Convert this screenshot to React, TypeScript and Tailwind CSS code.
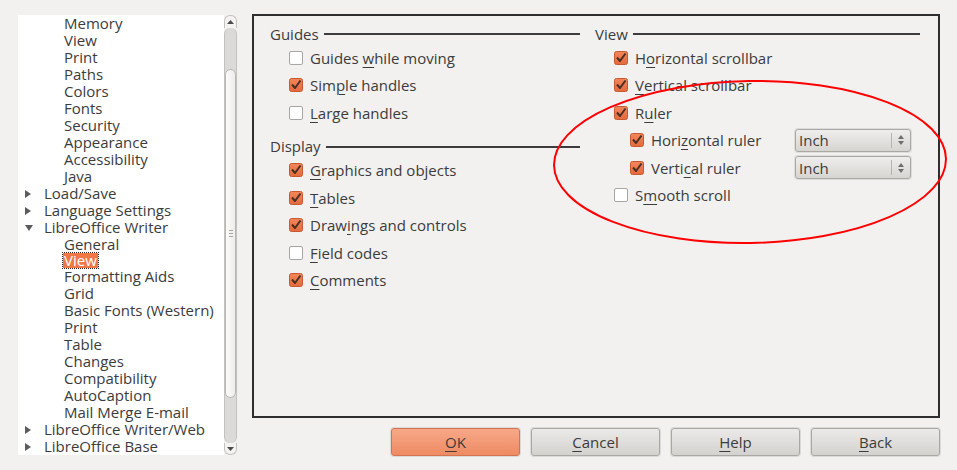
import React from 'react';

const font = { fontFamily: '"Open Sans", "Noto Sans", sans-serif' };

type TreeItem = { label: string; level: 1 | 2; arrow?: 'right' | 'down'; selected?: boolean };

const treeItems: TreeItem[] = [
  { label: 'Memory', level: 2 },
  { label: 'View', level: 2 },
  { label: 'Print', level: 2 },
  { label: 'Paths', level: 2 },
  { label: 'Colors', level: 2 },
  { label: 'Fonts', level: 2 },
  { label: 'Security', level: 2 },
  { label: 'Appearance', level: 2 },
  { label: 'Accessibility', level: 2 },
  { label: 'Java', level: 2 },
  { label: 'Load/Save', level: 1, arrow: 'right' },
  { label: 'Language Settings', level: 1, arrow: 'right' },
  { label: 'LibreOffice Writer', level: 1, arrow: 'down' },
  { label: 'General', level: 2 },
  { label: 'View', level: 2, selected: true },
  { label: 'Formatting Aids', level: 2 },
  { label: 'Grid', level: 2 },
  { label: 'Basic Fonts (Western)', level: 2 },
  { label: 'Print', level: 2 },
  { label: 'Table', level: 2 },
  { label: 'Changes', level: 2 },
  { label: 'Compatibility', level: 2 },
  { label: 'AutoCaption', level: 2 },
  { label: 'Mail Merge E-mail', level: 2 },
  { label: 'LibreOffice Writer/Web', level: 1, arrow: 'right' },
  { label: 'LibreOffice Base', level: 1, arrow: 'right' },
];

// label with one mnemonic letter underlined
const Mnemonic = ({ text, at }: { text: string; at: number }) => (
  <span>
    {text.slice(0, at)}
    <span className="underline decoration-1 underline-offset-[3px]">{text[at]}</span>
    {text.slice(at + 1)}
  </span>
);

const CheckBox = ({ checked }: { checked: boolean }) =>
  checked ? (
    <svg width="14" height="14" viewBox="0 0 14 14" className="shrink-0">
      <defs>
        <linearGradient id="cb" x1="0" y1="0" x2="0" y2="1">
          <stop offset="0" stopColor="#f4865a" />
          <stop offset="1" stopColor="#e36a3d" />
        </linearGradient>
      </defs>
      <rect x="0.5" y="0.5" width="13" height="13" rx="2" fill="url(#cb)" stroke="#c55a32" />
      <path d="M3 6.5 L6 10 L11.5 2.5" fill="none" stroke="#4a2f25" strokeWidth="2" strokeLinejoin="round" />
    </svg>
  ) : (
    <div className="w-[14px] h-[14px] shrink-0 rounded-[2px] border border-[#a8a7a5] bg-white" />
  );

const CheckRow = ({ label, at, checked, indent = false }: { label: string; at: number; checked: boolean; indent?: boolean }) => (
  <div className={`h-[27.5px] flex items-center gap-[7px] whitespace-nowrap ${indent ? 'pl-[35px]' : 'pl-[19px]'}`}>
    <CheckBox checked={checked} />
    <Mnemonic text={label} at={at} />
  </div>
);

const SectionTitle = ({ title }: { title: string }) => (
  <div className="h-[20px] flex items-center gap-[5px]">
    <span>{title}</span>
    <div className="flex-1 h-[2px] bg-[#3c3c3c]" />
  </div>
);

const ListBox = () => (
  <div className="w-[116px] h-[23px] rounded-[3px] border border-[#a9a8a5] bg-gradient-to-b from-[#efeeec] to-[#d6d5d2] flex items-center shadow-[0_0_0_1px_#dedcda]">
    <span className="flex-1 pl-[3px] text-[#3c3c3c]">Inch</span>
    <div className="w-px h-[15px] bg-[#b5b4b1]" />
    <div className="w-[18px] flex flex-col items-center gap-[2px]">
      <svg width="6" height="4" viewBox="0 0 6 4"><path d="M0 4 L3 0 L6 4Z" fill="#6f6e6c" /></svg>
      <svg width="6" height="4" viewBox="0 0 6 4"><path d="M0 0 L3 4 L6 0Z" fill="#6f6e6c" /></svg>
    </div>
  </div>
);

const Button = ({ label, primary = false }: { label: string; primary?: boolean }) => (
  <div
    className={`w-[129px] h-[28px] rounded-[3px] border flex items-center justify-center shadow-[0_0_0_1px_#dcdad7] ${
      primary
        ? 'border-[#d27452] bg-gradient-to-b from-[#f7a888] to-[#ee8a62] text-[#3c3c3c]'
        : 'border-[#a9a8a5] bg-gradient-to-b from-[#ebeae8] to-[#d3d2cf] text-[#3c3c3c]'
    }`}
  >
    <Mnemonic text={label} at={0} />
  </div>
);

const ScrollBar = () => (
  <div className="w-[13px] h-full flex flex-col bg-[#f2f1f0]">
    <div className="h-[13px] flex items-center justify-center rounded-t-[6px] border border-b-0 border-[#c4c2bf] bg-[#f4f3f2]">
      <svg width="7" height="4" viewBox="0 0 7 4"><path d="M0 4 L3.5 0 L7 4Z" fill="#4c4c4c" /></svg>
    </div>
    <div className="flex-1 flex flex-col border-x border-[#c4c2bf] bg-[#dcdad8] rounded-[6px]">
      <div className="h-[41px]" />
      <div className="h-[329px] rounded-[6px] border border-[#b9b7b4] bg-gradient-to-r from-[#fbfbfa] to-[#eeedeb] flex items-center justify-center">
        <div className="flex flex-col gap-[2px]">
          <div className="w-[4px] h-px bg-[#a9a7a4]" />
          <div className="w-[4px] h-px bg-[#a9a7a4]" />
          <div className="w-[4px] h-px bg-[#a9a7a4]" />
        </div>
      </div>
      <div className="flex-1" />
    </div>
    <div className="h-[12px] flex items-center justify-center rounded-b-[6px] border border-t-0 border-[#c4c2bf] bg-[#f4f3f2]">
      <svg width="7" height="4" viewBox="0 0 7 4"><path d="M0 0 L3.5 4 L7 0Z" fill="#4c4c4c" /></svg>
    </div>
  </div>
);

const Tree = () => (
  <div className="w-[219px] h-[440px] mt-[15px] ml-[18px] flex bg-white">
    <div className="flex-1 flex flex-col">
      {treeItems.map((item, i) => (
        <div key={i} className="h-[17px] leading-[17px] flex items-center whitespace-nowrap">
          <div className="w-[7px] shrink-0" />
          <div className="w-[19px] shrink-0 flex items-center">
            {item.arrow === 'right' && (
              <svg width="6" height="8" viewBox="0 0 6 8"><path d="M0 0 L6 4 L0 8Z" fill="#5c5c5c" /></svg>
            )}
            {item.arrow === 'down' && (
              <svg width="8" height="6" viewBox="0 0 8 6"><path d="M0 0 L8 0 L4 6Z" fill="#5c5c5c" /></svg>
            )}
          </div>
          {item.level === 2 && <div className="w-[20px] shrink-0" />}
          <span
            className={
              item.selected
                ? 'bg-[#f07746] text-white px-px -ml-px outline-1 outline-dotted outline-[#2b2b2b] leading-[15px]'
                : ''
            }
          >
            {item.label}
          </span>
        </div>
      ))}
    </div>
    <ScrollBar />
  </div>
);

export default function App() {
  return (
    <div className="relative w-[957px] h-[470px] bg-[#f2f1f0] text-[#3c3c3c] text-[15px] flex overflow-hidden" style={font}>
      <Tree />
      <div className="ml-[15px] mt-[14px] flex flex-col">
        <div className="w-[688px] h-[404px] border-2 border-[#2e2e2e] pl-[16px] pr-[18px] pt-[8px] flex gap-[15px]">
          <div className="w-[310px] flex flex-col">
            <SectionTitle title="Guides" />
            <CheckRow label="Guides while moving" at={7} checked={false} />
            <CheckRow label="Simple handles" at={3} checked />
            <CheckRow label="Large handles" at={0} checked={false} />
            <div className="h-[10px]" />
            <SectionTitle title="Display" />
            <CheckRow label="Graphics and objects" at={0} checked />
            <CheckRow label="Tables" at={0} checked />
            <CheckRow label="Drawings and controls" at={4} checked />
            <CheckRow label="Field codes" at={0} checked={false} />
            <CheckRow label="Comments" at={0} checked />
          </div>
          <div className="flex-1 flex flex-col">
            <SectionTitle title="View" />
            <CheckRow label="Horizontal scrollbar" at={1} checked />
            <CheckRow label="Vertical scrollbar" at={0} checked />
            <CheckRow label="Ruler" at={1} checked />
            <div className="h-[27.5px] flex items-center">
              <div className="w-[200px]">
                <CheckRow label="Horizontal ruler" at={4} checked indent />
              </div>
              <ListBox />
            </div>
            <div className="h-[27.5px] flex items-center">
              <div className="w-[200px]">
                <CheckRow label="Vertical ruler" at={5} checked indent />
              </div>
              <ListBox />
            </div>
            <CheckRow label="Smooth scroll" at={1} checked={false} />
          </div>
        </div>
        <div className="mt-[10px] flex justify-end gap-[11px]">
          <Button label="OK" primary />
          <Button label="Cancel" />
          <Button label="Help" />
          <Button label="Back" />
        </div>
      </div>
      <svg className="absolute left-0 top-0 pointer-events-none" width="957" height="470">
        <ellipse cx="750" cy="162" rx="196" ry="81" fill="none" stroke="#ff0000" strokeWidth="2" transform="rotate(-1 750 162)" />
      </svg>
    </div>
  );
}
